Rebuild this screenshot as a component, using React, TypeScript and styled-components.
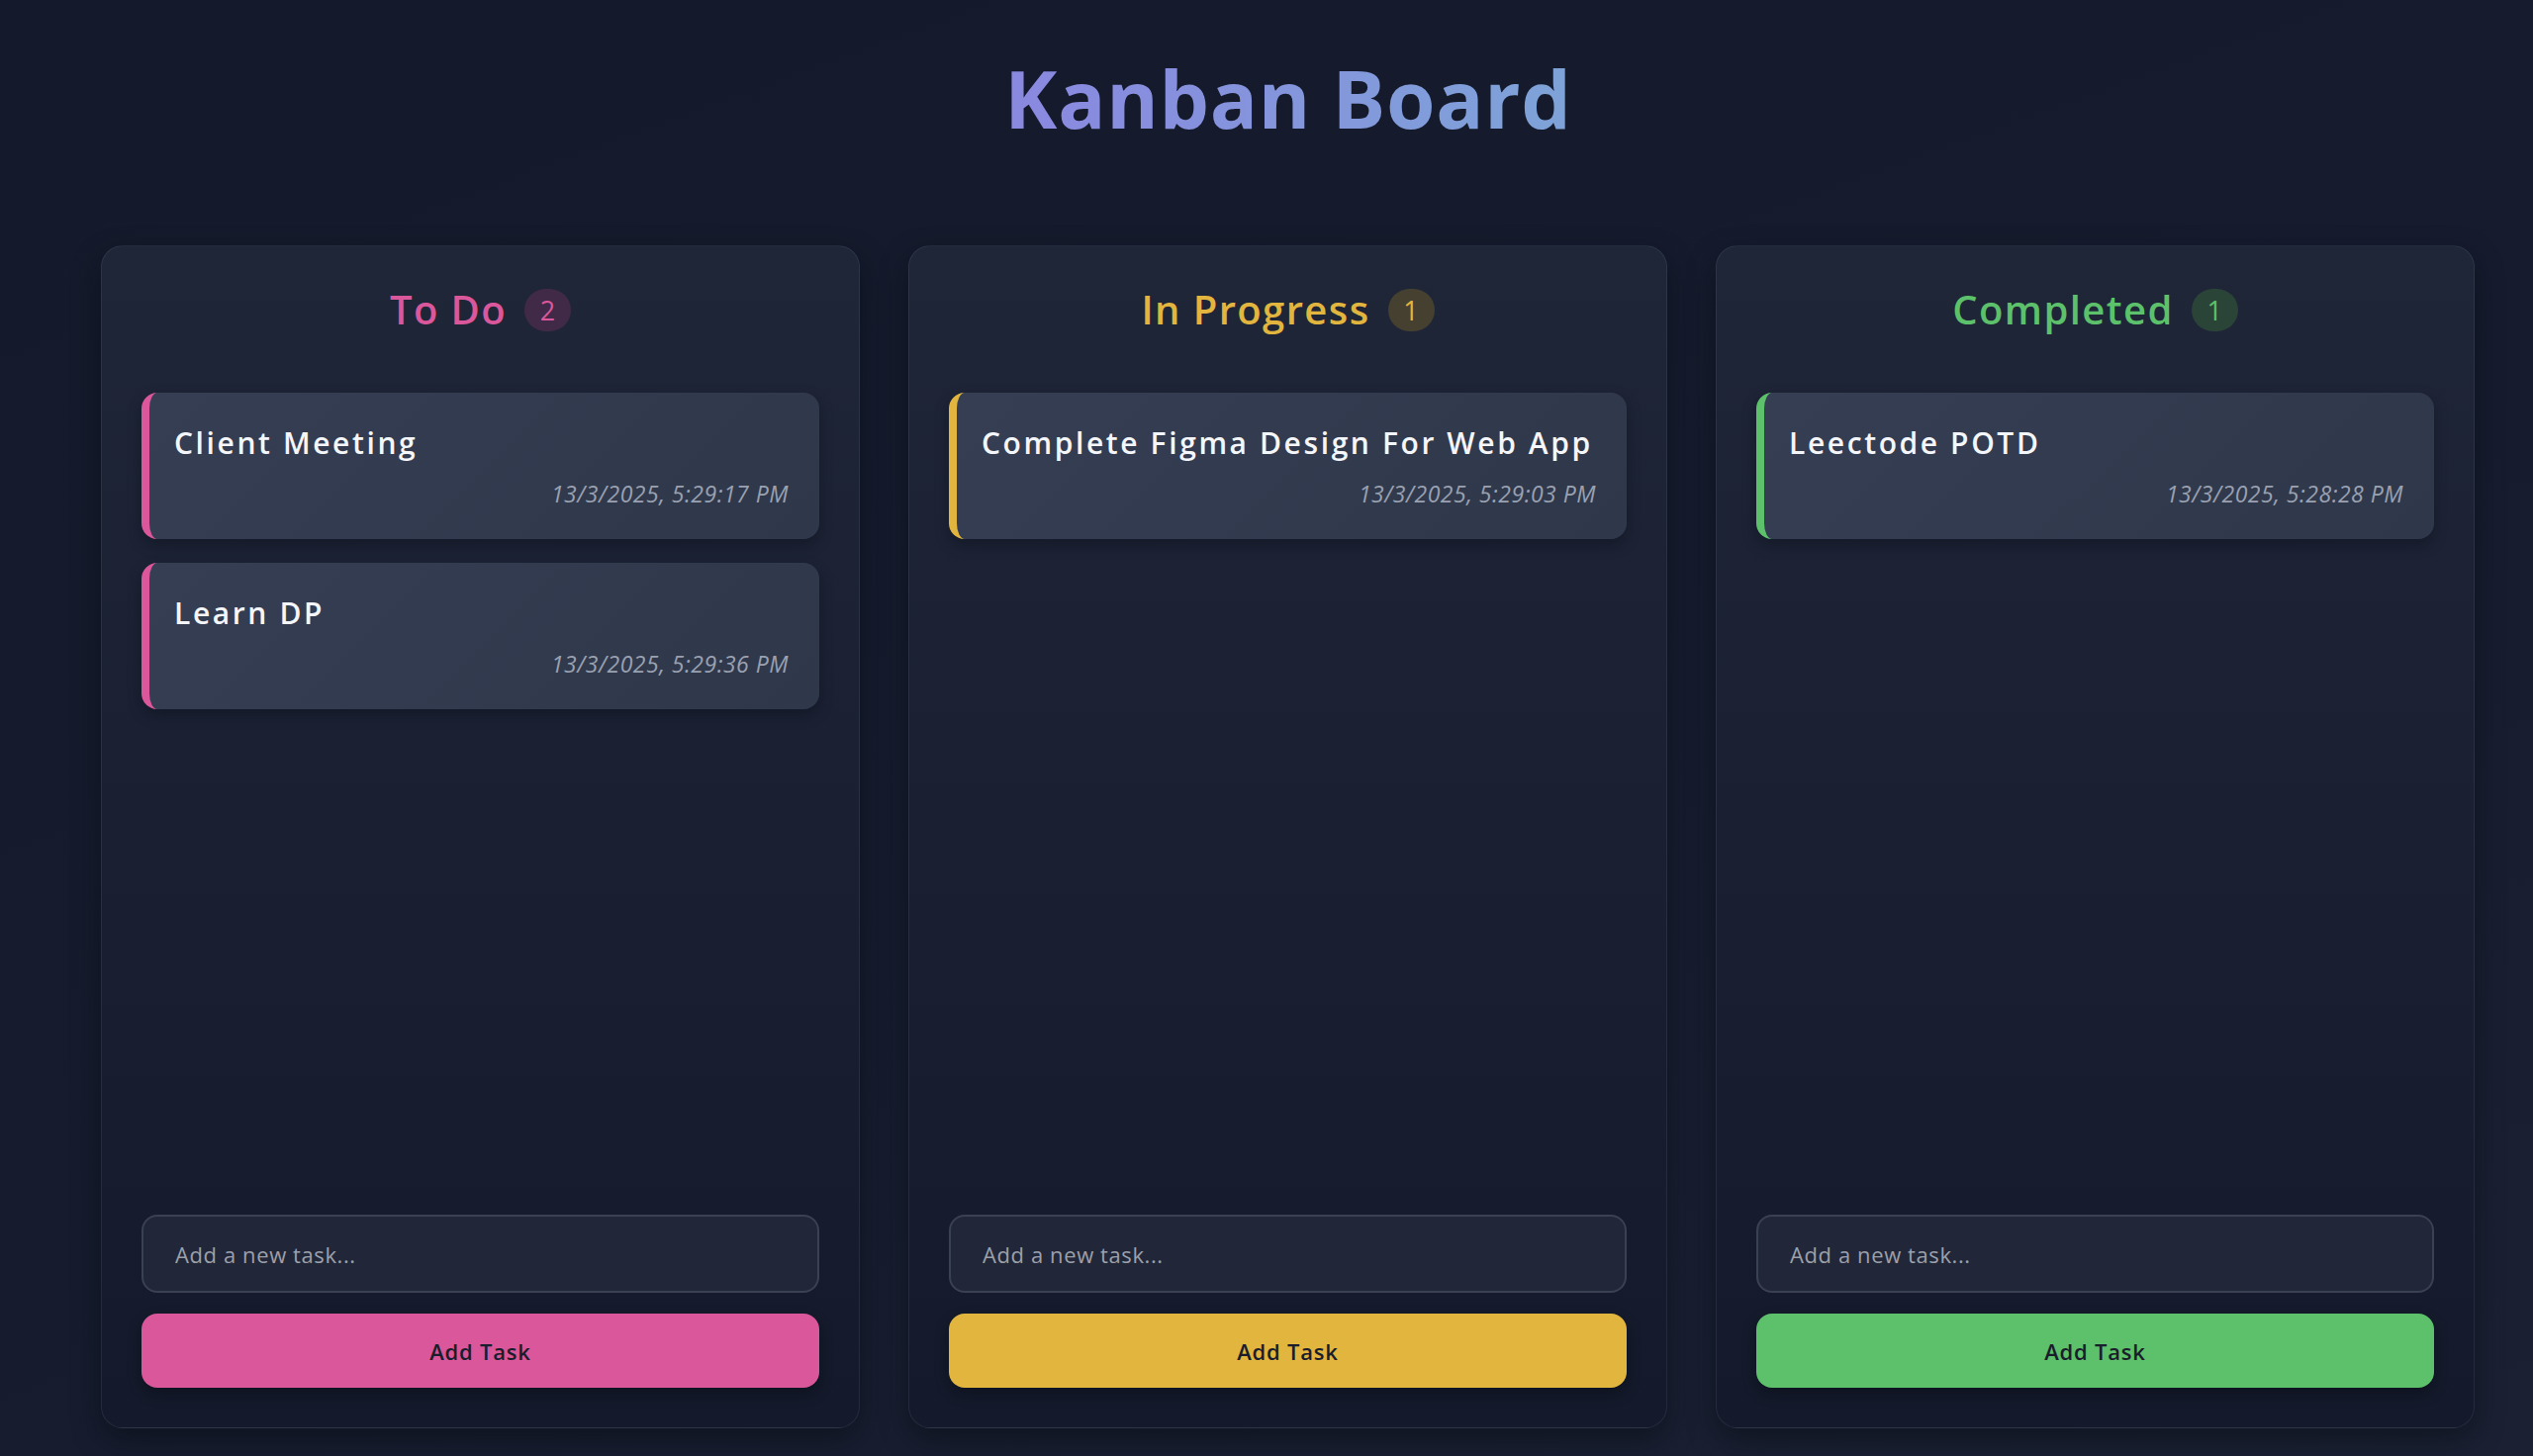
import React from "react";
import styled, { createGlobalStyle } from "styled-components";

const GlobalStyle = createGlobalStyle`
  html, body {
    margin: 0;
    padding: 0;
  }
  body {
    background: linear-gradient(160deg, #141a2b 0%, #161c2e 55%, #1b2133 100%);
    font-family: "Open Sans", "Noto Sans", sans-serif;
    color: #f1f3f7;
    min-height: 100vh;
  }
  * { box-sizing: border-box; }
`;

type Accent = { main: string; badge: string };

const ACCENTS: Record<string, Accent> = {
  todo: { main: "#d9579a", badge: "#402a48" },
  progress: { main: "#e2b63e", badge: "#45402f" },
  done: { main: "#5cc16a", badge: "#2a4437" },
};

const Page = styled.div`
  min-height: 100vh;
  padding: 51px 58px 26px 102px;
`;

const Title = styled.h1`
  margin: 0 0 101px;
  text-align: center;
  font-size: 80px;
  line-height: 96px;
  font-weight: 700;
  letter-spacing: 0.7px;
  background: linear-gradient(90deg, #8a88e0 0%, #7ea3d8 100%);
  -webkit-background-clip: text;
  background-clip: text;
  color: transparent;
  width: fit-content;
  margin-left: auto;
  margin-right: auto;
`;

const Board = styled.div`
  display: grid;
  grid-template-columns: repeat(3, 767px);
  gap: 49px;
`;

const Column = styled.section`
  height: 1196px;
  display: flex;
  flex-direction: column;
  padding: 40px 40px 40px;
  border: 1.5px solid rgba(148, 163, 184, 0.12);
  border-radius: 22px;
  background: linear-gradient(180deg, #1f2638 0%, #1a2032 50%, #141a2b 100%);
  box-shadow: 0 12px 30px rgba(5, 8, 16, 0.45);
`;

const ColumnHeader = styled.div`
  display: flex;
  align-items: center;
  justify-content: center;
  gap: 18px;
  margin-bottom: 60px;
`;

const ColumnTitle = styled.h2<{ $color: string }>`
  margin: 0;
  font-size: 40px;
  line-height: 48px;
  font-weight: 600;
  letter-spacing: 1.4px;
  color: ${(p) => p.$color};
`;

const Badge = styled.span<{ $color: string; $bg: string }>`
  display: inline-flex;
  align-items: center;
  justify-content: center;
  min-width: 47px;
  height: 43px;
  padding: 0 14px;
  border-radius: 999px;
  background: ${(p) => p.$bg};
  color: ${(p) => p.$color};
  font-size: 27px;
  font-weight: 400;
`;

const TaskList = styled.div`
  flex: 1;
  display: flex;
  flex-direction: column;
  gap: 24px;
`;

const Card = styled.div<{ $color: string }>`
  height: 148px;
  padding: 31px 31px 30px 25px;
  border-left: 8px solid ${(p) => p.$color};
  border-radius: 16px;
  background: linear-gradient(135deg, #353e53 0%, #2f374a 100%);
  box-shadow: 0 6px 14px rgba(5, 8, 16, 0.35);
`;

const CardTitle = styled.div`
  font-size: 30px;
  line-height: 39px;
  font-weight: 550;
  letter-spacing: 2.6px;
  color: #f4f6fa;
`;

const CardDate = styled.div`
  margin-top: 17px;
  text-align: right;
  font-size: 23px;
  line-height: 30px;
  font-style: italic;
  letter-spacing: 0.5px;
  color: #9aa1b1;
`;

const TaskInput = styled.input`
  display: block;
  width: 100%;
  height: 79px;
  margin-bottom: 21px;
  padding: 0 32px;
  border: 2px solid #3a4153;
  border-radius: 16px;
  background: #212738;
  color: #e5e7eb;
  font-family: inherit;
  font-size: 22px;
  letter-spacing: 0.6px;
  outline: none;
  &::placeholder {
    color: #9ca0ab;
  }
`;

const AddButton = styled.button<{ $color: string }>`
  display: block;
  width: 100%;
  height: 75px;
  border: none;
  border-radius: 16px;
  background: ${(p) => p.$color};
  color: #1a1d2b;
  font-family: inherit;
  font-size: 22px;
  font-weight: 600;
  letter-spacing: 0.8px;
  box-shadow: 0 6px 14px rgba(5, 8, 16, 0.4);
  cursor: pointer;
`;

type Task = { title: string; date: string };
type Col = { key: string; title: string; tasks: Task[] };

const COLUMNS: Col[] = [
  {
    key: "todo",
    title: "To Do",
    tasks: [
      { title: "Client Meeting", date: "13/3/2025, 5:29:17 PM" },
      { title: "Learn DP", date: "13/3/2025, 5:29:36 PM" },
    ],
  },
  {
    key: "progress",
    title: "In Progress",
    tasks: [{ title: "Complete Figma Design For Web App", date: "13/3/2025, 5:29:03 PM" }],
  },
  {
    key: "done",
    title: "Completed",
    tasks: [{ title: "Leectode POTD", date: "13/3/2025, 5:28:28 PM" }],
  },
];

export default function App() {
  return (
    <>
      <GlobalStyle />
      <Page>
        <Title>Kanban Board</Title>
        <Board>
          {COLUMNS.map((col) => {
            const a = ACCENTS[col.key];
            return (
              <Column key={col.key}>
                <ColumnHeader>
                  <ColumnTitle $color={a.main}>{col.title}</ColumnTitle>
                  <Badge $color={a.main} $bg={a.badge}>
                    {col.tasks.length}
                  </Badge>
                </ColumnHeader>
                <TaskList>
                  {col.tasks.map((t) => (
                    <Card key={t.title} $color={a.main}>
                      <CardTitle>{t.title}</CardTitle>
                      <CardDate>{t.date}</CardDate>
                    </Card>
                  ))}
                </TaskList>
                <TaskInput placeholder="Add a new task..." />
                <AddButton $color={a.main}>Add Task</AddButton>
              </Column>
            );
          })}
        </Board>
      </Page>
    </>
  );
}
